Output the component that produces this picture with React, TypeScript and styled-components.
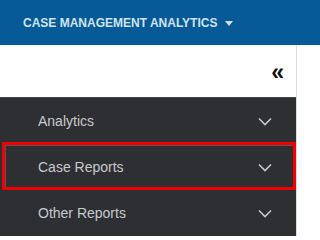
import React from 'react'
import styled, { createGlobalStyle } from 'styled-components'

const GlobalStyle = createGlobalStyle`
  html, body {
    margin: 0;
    padding: 0;
    background: #ffffff;
    font-family: "Liberation Sans", Arial, sans-serif;
  }
`

const TopBar = styled.header`
  display: flex;
  align-items: center;
  height: 45px;
  padding-left: 23px;
  background: #055a97;
  color: #d3e2ef;
`

const AppTitle = styled.span`
  font-size: 12px;
  font-weight: 700;
  text-transform: uppercase;
`

const Caret = styled.svg`
  margin-left: 8px;
  margin-top: 1px;
`

const SideBar = styled.nav`
  width: 296px;
  border-right: 1px solid #dcdcdc;
`

const ToggleRow = styled.div`
  display: flex;
  align-items: center;
  justify-content: flex-end;
  height: 52px;
  padding-right: 12px;
  background: #ffffff;
`

const CollapseButton = styled.span`
  font-size: 23px;
  font-weight: 700;
  line-height: 1;
  color: #111;
  margin-top: 2px;
`

const Menu = styled.ul`
  list-style: none;
  margin: 0;
  padding: 0;
  background: #2e2f33;
  border-top: 1px solid #45464a;
`

const MenuItem = styled.li<{ $marked?: boolean }>`
  position: relative;
  display: flex;
  align-items: center;
  justify-content: space-between;
  height: 46px;
  padding: 0 24px 0 38px;
  font-size: 14px;
  color: #c8c9cb;

  &::after {
    content: '';
    display: ${({ $marked }) => ($marked ? 'block' : 'none')};
    position: absolute;
    top: -2px;
    left: 2px;
    right: 0;
    bottom: 0;
    border: 3px solid #f40000;
    box-shadow: inset 1px 1px 0 #55565a;
  }
`

const Chevron = () => (
  <svg width="14" height="9" viewBox="0 0 14 9">
    <path d="M1 1.5 L7 7.5 L13 1.5" fill="none" stroke="#c6c7c9" strokeWidth="1.6" />
  </svg>
)

const items = [
  { label: 'Analytics' },
  { label: 'Case Reports', marked: true },
  { label: 'Other Reports' },
]

export default function App() {
  return (
    <>
      <GlobalStyle />
      <TopBar>
        <AppTitle>Case Management Analytics</AppTitle>
        <Caret width="8" height="5" viewBox="0 0 8 5">
          <path d="M0 0 H8 L4 5 Z" fill="#d3e2ef" />
        </Caret>
      </TopBar>
      <SideBar>
        <ToggleRow>
          <CollapseButton>«</CollapseButton>
        </ToggleRow>
        <Menu>
          {items.map((it) => (
            <MenuItem key={it.label} $marked={it.marked}>
              <span>{it.label}</span>
              <Chevron />
            </MenuItem>
          ))}
        </Menu>
      </SideBar>
    </>
  )
}
